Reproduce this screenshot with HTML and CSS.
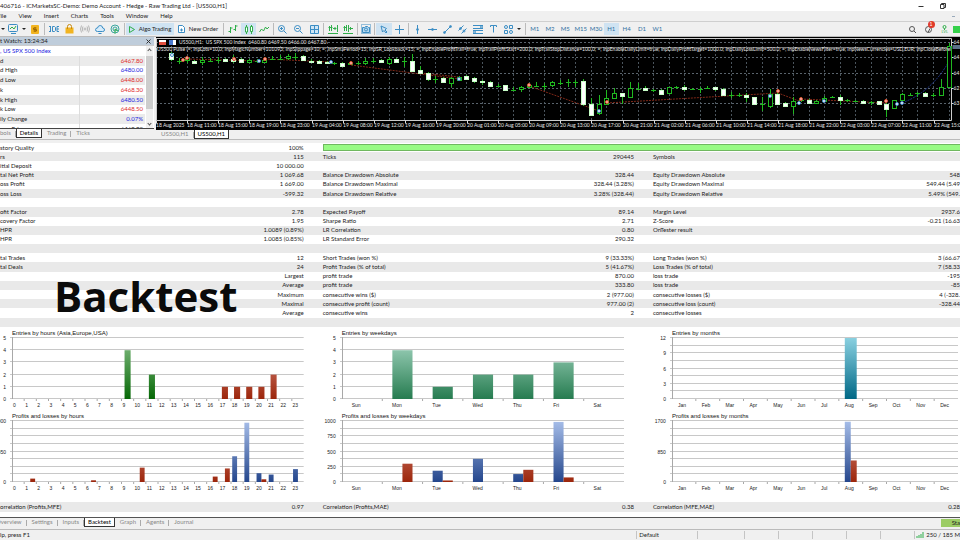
FILE: index.html
```
<!DOCTYPE html>
<html lang="en">
<head>
    <meta charset="UTF-8">
    <title>Demo Account - [US500,H1]</title>
    <link rel="stylesheet" href="styles.css">
</head>
<body>
    <header class="title-bar">
        <span>406716 - ICMarketsSC-Demo: Demo Account - Hedge - Raw Trading Ltd - [US500,H1]</span>
        <div class="window-buttons">
            <button aria-label="Minimize"><svg width="6" height="6"><path d="M0.5 3.5h5"/></svg></button>
            <button aria-label="Restore"><svg width="6" height="6"><path d="M0.5 1.5h3.5v4h-3.5zM1.5 1.5v-1h4v4h-1.5"/></svg></button>
        </div>
    </header>

    <nav class="menu-bar">
        <a href="#">File</a>
        <a href="#">View</a>
        <a href="#">Insert</a>
        <a href="#">Charts</a>
        <a href="#">Tools</a>
        <a href="#">Window</a>
        <a href="#">Help</a>
        <span class="mdi-min"></span>
    </nav>

    <div class="toolbar">
        <div class="group start">
            <span class="arrow"></span>
            <button aria-label="Chart window"><svg class="blue" width="11" height="10"><rect x="0.5" y="0.5" width="9" height="7" rx="1"/><path d="M3 9.5h5"/><path class="green" d="M2 5l2-2 2 2 2-3"/></svg></button>
            <span class="arrow"></span>
            <button aria-label="Symbols"><svg width="8" height="9"><rect class="gold" width="8" height="9" rx="1"/><path class="brown" d="M5.5 3h-3v1.500h3v1.500h-3M4 2v5"/></svg></button>
        </div>
        <div class="group five">
            <button aria-label="IDE"><svg class="blue" width="10" height="8"><path d="M0 1.5h2M0 6.500h2M1.500 1.500v5M3.500 1.500v5M3.500 1.500h2l1 1v3l-1 1h-2M10 1.500h-2v5h2M8 4h2"/></svg></button>
            <button aria-label="Market"><svg width="9" height="10"><path class="gold" d="M0.500 3.500h8v6h-8z"/><path class="bag" d="M2.500 5v-2.500q0-2 2-2t2 2v2.500"/></svg></button>
            <button aria-label="Signals"><svg class="grey" width="10" height="8"><circle cx="5" cy="4" r="1"/><path d="M3 1.500q-1.500 2.500 0 5M7 1.500q1.500 2.500 0 5M1.500 0.500q-2 3.500 0 7M8.500 0.500q2 3.500 0 7"/></svg></button>
            <button aria-label="VPS"><svg class="blue" width="10" height="9"><path fill="#d8ecfa" d="M2.500 6.500q-2 0-2-1.800t2-1.700q0.500-2.500 2.700-2.500t2.500 2.500q2 0.200 1.800 2t-2 1.500z"/><path d="M3.500 8.500h3"/></svg></button>
            <button aria-label="Strategy tester"><svg class="teal" width="10" height="10"><circle cx="5" cy="5" r="4"/><circle cx="5" cy="5" r="2"/><path class="green" d="M5 5v4.500M5 5l3 2"/></svg></button>
        </div>
        <div class="group">
            <button class="labelled active"><svg class="green" width="6" height="7"><path d="M0.500 0.500l5 3-5 3z"/></svg>Algo Trading</button>
            <button class="labelled"><svg class="blue" width="7" height="8"><path fill="#fff" d="M0.500 0.500h4l2 2v5h-6z"/><path d="M2 5h3M3.500 3.500v3"/></svg>New Order</button>
        </div>
        <div class="group three">
            <button aria-label="Bar chart"><svg class="green" width="10" height="8"><path d="M2.500 2v6M0.500 6.500h2M2.500 3h2M7.500 0v6M5.500 4.500h2M7.500 1h2"/></svg></button>
            <button class="active" aria-label="Candles"><svg class="green" width="10" height="9"><path d="M2.500 0v9M7.500 0v9"/><path fill="#fff" d="M1.500 2h2v5h-2zM6.500 1.500h2v5h-2z"/></svg></button>
            <button aria-label="Line chart"><svg class="green" width="10" height="7"><path d="M0.500 6l2-3 2 2 2-4 1.500 2 2-2"/></svg></button>
        </div>
        <div class="group three">
            <button aria-label="Zoom in"><svg class="blue" width="9" height="9"><circle cx="3.500" cy="3.500" r="3"/><path d="M6 6l2.500 2.500M2 3.500h3M3.500 2v3"/></svg></button>
            <button aria-label="Zoom out"><svg class="blue" width="9" height="9"><circle cx="3.500" cy="3.500" r="3"/><path d="M6 6l2.500 2.500M2 3.500h3"/></svg></button>
            <button aria-label="Tile windows"><svg class="blue" width="9" height="9"><path fill="#cfe6f6" d="M0.500 0.500h8v8h-8zM4.500 0.500v8M0.500 4.500h8"/></svg></button>
        </div>
        <div class="group two">
            <button aria-label="Auto scroll"><svg class="green" width="10" height="9"><path d="M1.500 1v5M3.500 0v6M0.500 2.500h4M5 3.500h3M6.500 2l1.500 1.500-1.500 1.500M9.500 0v7M0 8.500h10"/></svg></button>
            <button aria-label="Chart shift"><svg class="green" width="10" height="9"><path d="M1.500 1v5M3.500 0v6M0.500 2.500h3M5.500 0v7M7 3.500h3M8 2l-1.500 1.500 1.500 1.500M0 8.500h10"/></svg></button>
        </div>
        <div class="group one">
            <button aria-label="Screenshot"><svg class="blue" width="10" height="10"><rect x="0.500" y="0.500" width="9" height="9" stroke-dasharray="1 1"/><path fill="#b5d8ef" d="M1.500 3.500h2l1-1h2l1 1h1v5h-7z"/><circle cx="5" cy="5.500" r="1.500"/></svg></button>
        </div>
        <div class="group two">
            <button class="active" aria-label="Cursor"><svg class="blue" width="8" height="9"><path d="M1 1l1.500 6 1.500-1.500 2 2.500 1-1-2-2 1.500-1.500z"/></svg></button>
            <button aria-label="Crosshair"><svg class="blue" width="9" height="9"><path d="M4.500 0v9M0 4.500h9"/></svg></button>
        </div>
        <div class="group draw">
            <button aria-label="Vertical line"><svg class="blue" width="9" height="9"><path d="M4.500 0v9"/><circle cx="4.500" cy="4.500" r="1"/></svg></button>
            <button aria-label="Horizontal line"><svg class="blue" width="9" height="9"><path d="M0 4.500h9"/><circle cx="4.500" cy="4.500" r="1"/></svg></button>
            <button aria-label="Trend line"><svg class="blue" width="9" height="9"><path d="M1 8l7-7"/><circle cx="1.500" cy="7.500" r="1"/><circle cx="7.500" cy="1.500" r="1"/></svg></button>
            <button aria-label="Channel"><svg class="blue" width="9" height="9"><path d="M0.500 5.500l5-5M3.500 8.500l5-5"/><circle cx="2.500" cy="3.500" r="1"/><circle cx="6" cy="6" r="1"/></svg></button>
            <button aria-label="Fibonacci"><svg class="blue" width="10" height="9"><path d="M0 0.500h10M0 3.500h10M0 5.500h10M0 8.500h10"/><circle cx="1.500" cy="7" r="1"/><circle cx="8.500" cy="2" r="1"/></svg></button>
            <button aria-label="Text"><svg class="blue" width="7" height="8"><path d="M0.500 2v-1.500h6v1.500M3.500 0.500v7"/></svg></button>
            <button aria-label="Objects"><svg class="blue" width="9" height="9"><circle cx="2" cy="2" r="1.500"/><path d="M5.500 0.500h3v3h-3zM0.500 5.500h3v3h-3z"/><circle cx="7" cy="7" r="1.500"/></svg></button>
        </div>
        <span class="arrow"></span>
        <div class="group frames">
            <button>M1</button>
            <button>M2</button>
            <button>M5</button>
            <button>M15</button>
            <button>M30</button>
            <button class="active">H1</button>
            <button>H4</button>
            <button>D1</button>
            <button>W1</button>
        </div>
        <div class="toolbar-right">
            <button aria-label="Search"><svg class="dark" width="7" height="7"><circle cx="3" cy="3" r="2.500"/><path d="M5 5l2 2"/></svg></button>
            <button class="bell" aria-label="Notifications"><svg class="dark" width="8" height="7"><circle cx="3.500" cy="3.500" r="3"/><path d="M3 6.500l2-4"/></svg><span class="badge">1</span></button>
            <button class="level" aria-label="Level"><svg class="green" width="5" height="5"><circle cx="2.500" cy="2" r="1.500"/><path d="M2.500 3.500v1.500"/></svg>LVL</button>
            <span class="battery"></span>
        </div>
    </div>

    <main class="workspace">
        <section class="watch">
            <div class="watch-header"><span>t Watch: 13:24:34</span><button aria-label="Close"><svg width="5" height="5"><path d="M0.500 0.500l4 4M4.500 0.500l-4 4"/></svg></button></div>
            <div class="watch-body">
                <table>
                    <colgroup><col class="name"><col></colgroup>
                    <tr><td colspan="2" class="up">, US SPX 500 Index</td></tr>
                    <tr><td>d</td><td class="down">6467.80</td></tr>
                    <tr><td>d High</td><td class="up">6480.00</td></tr>
                    <tr><td>d Low</td><td class="down">6448.00</td></tr>
                    <tr><td>k</td><td class="down">6468.30</td></tr>
                    <tr><td>k High</td><td class="up">6480.50</td></tr>
                    <tr><td>k Low</td><td class="down">6448.50</td></tr>
                    <tr><td>ily Change</td><td class="up">0.07%</td></tr>
                    <tr><td>pen Price</td><td>6468.20</td></tr>
                </table>
                <div class="scrollbar"><span class="chev"></span><span class="thumb"></span><span class="chev flip"></span></div>
            </div>
            <nav class="tabs watch-tabs">
                <a href="#">bols</a>
                <a href="#" class="selected">Details</a>
                <a href="#">Trading</a>
                <a href="#">Ticks</a>
            </nav>
        </section>

        <section class="chart-window">
            <div class="price-chart">
                <svg id="priceChart"></svg>
                <div class="chart-caption"><i class="flag red"></i><i class="flag"></i>US500,H1:&nbsp; US SPX 500 Index&nbsp; 6460.80 6469.50 6466.00 6467.80</div>
                <div class="chart-inputs">US500 Pulse (=; InpLots=10.0; InpMagicNumber=101093; InpSlippage=10; =; InpSmaPeriod=15; InpSR_Lookback=15; =; InpEnableProfitTrail=true; InpTrailProfitStart=200.0; InpTrailStopDistance=100.0; =; InpEnableDailyLimit=true; InpDailyProfitTarget=1000.0; InpDailyLossLimit=500.0; =; InpEnableNewsFilter=true; InpNewsCurrencies=USD,EUR; InpCloseBeforeNews=false; InpNo</div>
            </div>
            <nav class="tabs chart-tabs">
                <a href="#">US500,H1</a>
                <a href="#" class="selected">US500,H1</a>
            </nav>
        </section>
    </main>

    <section class="report">
        <div class="stats">
            <table>
                <colgroup><col class="c1"><col class="c2"><col class="c3"><col class="c4"><col class="c5"><col class="c6"></colgroup>
                <tr><td>story Quality</td><td>100%</td><td colspan="4" class="quality"><div></div></td></tr>
                <tr><td>rs</td><td>115</td><td>Ticks</td><td>290445</td><td>Symbols</td><td></td></tr>
                <tr><td>itial Deposit</td><td>10 000.00</td><td></td><td></td><td></td><td></td></tr>
                <tr><td>tal Net Profit</td><td>1 069.68</td><td>Balance Drawdown Absolute</td><td>328.44</td><td>Equity Drawdown Absolute</td><td>548</td></tr>
                <tr><td>oss Profit</td><td>1 669.00</td><td>Balance Drawdown Maximal</td><td>328.44 (3.28%)</td><td>Equity Drawdown Maximal</td><td>549.44 (5.49</td></tr>
                <tr><td>oss Loss</td><td>-599.32</td><td>Balance Drawdown Relative</td><td>3.28% (328.44)</td><td>Equity Drawdown Relative</td><td>5.49% (549.</td></tr>
                <tr><td></td><td></td><td></td><td></td><td></td><td></td></tr>
                <tr><td>ofit Factor</td><td>2.78</td><td>Expected Payoff</td><td>89.14</td><td>Margin Level</td><td>2937.6</td></tr>
                <tr><td>covery Factor</td><td>1.95</td><td>Sharpe Ratio</td><td>2.71</td><td>Z-Score</td><td>-0.21 (16.63</td></tr>
                <tr><td>HPR</td><td>1.0089 (0.89%)</td><td>LR Correlation</td><td>0.80</td><td>OnTester result</td><td></td></tr>
                <tr><td>HPR</td><td>1.0085 (0.85%)</td><td>LR Standard Error</td><td>290.32</td><td></td><td></td></tr>
                <tr><td></td><td></td><td></td><td></td><td></td><td></td></tr>
                <tr><td>tal Trades</td><td>12</td><td>Short Trades (won %)</td><td>9 (33.33%)</td><td>Long Trades (won %)</td><td>3 (66.67</td></tr>
                <tr><td>tal Deals</td><td>24</td><td>Profit Trades (% of total)</td><td>5 (41.67%)</td><td>Loss Trades (% of total)</td><td>7 (58.33</td></tr>
                <tr><td></td><td>Largest</td><td>profit trade</td><td>870.00</td><td>loss trade</td><td>-195</td></tr>
                <tr><td></td><td>Average</td><td>profit trade</td><td>333.80</td><td>loss trade</td><td>-85</td></tr>
                <tr><td></td><td>Maximum</td><td>consecutive wins ($)</td><td>2 (977.00)</td><td>consecutive losses ($)</td><td>4 (-328.</td></tr>
                <tr><td></td><td>Maximal</td><td>consecutive profit (count)</td><td>977.00 (2)</td><td>consecutive loss (count)</td><td>-328.44</td></tr>
                <tr><td></td><td>Average</td><td>consecutive wins</td><td>2</td><td>consecutive losses</td><td></td></tr>
                <tr><td></td><td></td><td></td><td></td><td></td><td></td></tr>
            </table>
            <h1 class="overlay-title">Backtest</h1>
        </div>

        <div class="charts">
            <div class="chart-column hours">
                <figure data-chart="hours"></figure>
                <figure data-chart="hoursProfit"></figure>
            </div>
            <div class="chart-column weekdays">
                <figure data-chart="weekdays"></figure>
                <figure data-chart="weekdaysProfit"></figure>
            </div>
            <div class="chart-column months">
                <figure data-chart="months"></figure>
                <figure data-chart="monthsProfit"></figure>
            </div>
        </div>

        <table class="correlation">
            <colgroup><col class="c1"><col class="c2"><col class="c3"><col class="c4"><col class="c5"><col class="c6"></colgroup>
            <tr><td>orrelation (Profits,MFE)</td><td>0.97</td><td>Correlation (Profits,MAE)</td><td>0.38</td><td>Correlation (MFE,MAE)</td><td>0.28</td></tr>
        </table>
    </section>

    <div class="bottom-bar">
        <nav class="tabs bottom-tabs">
            <a href="#">Overview</a>
            <a href="#">Settings</a>
            <a href="#">Inputs</a>
            <a href="#" class="selected">Backtest</a>
            <a href="#">Graph</a>
            <a href="#">Agents</a>
            <a href="#">Journal</a>
        </nav>
        <button class="start-button">Sta</button>
    </div>

    <footer class="status-bar">
        <span class="help">lp, press F1</span>
        <span class="profile">Default</span>
        <span class="cell"></span>
        <span class="cell small"></span>
        <span class="cell small"></span>
        <span class="cell small"></span>
        <span class="cell small"></span>
        <span class="cell small"></span>
        <span class="traffic"><svg width="8" height="6"><path d="M1 6v-2M3 6v-3M5 6v-4M7 6v-6"/></svg>250 / 185 M</span>
    </footer>

    <script src="charts.js"></script>
</body>
</html>
```
FILE: styles.css
```
* {
    box-sizing: border-box;
}
body {
    margin: 0;
    height: 100vh;
    display: flex;
    flex-direction: column;
    overflow: hidden;
    background: #f0f0f0;
    color: #222;
    font: 6px/8px Lato, sans-serif;
    white-space: nowrap;
}
button {
    border: 0;
    padding: 0;
    margin: 0;
    background: none;
    font: inherit;
    color: inherit;
    display: flex;
    align-items: center;
    justify-content: center;
}
a {
    color: inherit;
    text-decoration: none;
}
svg {
    display: block;
    flex: none;
    fill: none;
    stroke: #333;
}
table {
    border-collapse: collapse;
    table-layout: fixed;
    width: 100%;
}
td {
    padding: 0;
    overflow: hidden;
    line-height: 8px;
}

/* title and menu */
.title-bar {
    height: 11px;
    background: #fff;
    display: flex;
    align-items: center;
    justify-content: space-between;
}
.window-buttons {
    display: flex;
    gap: 16px;
    padding-right: 14px;
}
.menu-bar {
    height: 11px;
    display: flex;
    align-items: center;
    gap: 12px;
    margin-left: -3px;
    border-bottom: 1px solid #cfcfcf;
    background: #f0f0f0;
}
.mdi-min {
    margin: 0 5px 0 auto;
    width: 3px;
    height: 1px;
    background: #9ab;
}

/* toolbar */
.toolbar {
    height: 15px;
    display: flex;
    align-items: center;
    border-bottom: 1px solid #bbb;
}
.group {
    display: flex;
    height: 12px;
    border-right: 1px solid #bbb;
    padding: 0 1px;
}
.group button {
    flex: 1;
}
.group .labelled {
    flex: none;
    gap: 4px;
    padding: 0 2px;
    width: 48px;
}
.start {
    width: 45px;
    align-items: center;
}
.start .arrow {
    flex: none;
}
.five {
    width: 80px;
}
.three {
    width: 50px;
}
.two {
    width: 34px;
}
.one {
    width: 17px;
}
.draw {
    width: 108px;
    border: 0;
}
.frames {
    width: 141px;
    border: 0;
    border-left: 1px solid #bbb;
    margin-left: 4px;
    color: #2f6f9f;
}
.active {
    background: #cfe3f2;
}
.arrow {
    border: 2px solid transparent;
    border-top-color: #222;
    border-bottom: 0;
    width: 4px;
}
.blue {
    stroke: #3b8dc4;
}
.green {
    stroke: #2fae4a;
}
.teal {
    stroke: #3aa6a0;
}
.grey {
    stroke: #b5b5b5;
}
.dark {
    stroke: #555;
}
.gold {
    fill: #f2b420;
    stroke: none;
}
.brown {
    stroke: #a06a00;
}
.bag {
    stroke: #c78a10;
}
.toolbar-right {
    margin-left: auto;
    display: flex;
    align-items: center;
    gap: 9px;
}
.bell {
    position: relative;
}
.badge {
    position: absolute;
    left: 3px;
    top: -5px;
    width: 7px;
    height: 7px;
    border-radius: 50%;
    background: #e03a2a;
    color: #fff;
    font-size: 5px;
    line-height: 7px;
    text-align: center;
}
.level {
    flex-direction: column;
    font-size: 4px;
    line-height: 4px;
    color: #2fae4a;
}
.battery {
    width: 7px;
    height: 7px;
    margin-left: -4px;
    background: #35d04a;
}

/* market watch and price chart */
.workspace {
    display: flex;
    flex: none;
    height: 103px;
    border-bottom: 1px solid #bbb;
}
.watch {
    width: 154px;
    display: flex;
    flex-direction: column;
}
.watch-header {
    height: 8px;
    flex: none;
    display: flex;
    align-items: center;
    justify-content: space-between;
    padding-right: 3px;
    background: #bfcddb;
}
.watch-body {
    flex: 1;
    min-height: 0;
    display: flex;
    align-items: flex-start;
    overflow: hidden;
    background: #fff;
    border-top: 1px solid #ccc;
}
.watch-body table {
    flex: 1;
    height: 88px;
}
.watch-body tr:nth-child(even) {
    background: #ebebeb;
}
.name {
    width: 79px;
}
.watch-body td + td {
    border-left: 1px solid #ddd;
    text-align: right;
    padding-right: 2px;
}
.up {
    color: #2222e0;
}
.down {
    color: #e02a2a;
}
.scrollbar {
    width: 7px;
    height: 100%;
    margin: 0 1px;
    background: #f0f0f0;
    display: flex;
    flex-direction: column;
    align-items: center;
    padding: 3px 0;
}
.thumb {
    width: 7px;
    height: 53px;
    margin: 4px 0 auto;
    background: #cdcdcd;
}
.chev {
    width: 3px;
    height: 3px;
    border: 1px solid #555;
    border-right: 0;
    border-bottom: 0;
    transform: rotate(45deg);
}
.flip {
    transform: rotate(225deg);
}
.tabs {
    display: flex;
    color: #888;
}
.tabs a {
    position: relative;
    padding: 0 5px;
    height: 9px;
    line-height: 8px;
}
.tabs a:not(.selected):not(:last-child)::after {
    content: "";
    position: absolute;
    right: 0;
    top: 2px;
    height: 6px;
    border-right: 1px solid #aaa;
}
.tabs .selected {
    background: #fff;
    color: #000;
    border: 1px solid #333;
    border-top: 0;
    padding: 0 3px;
}
.watch-tabs {
    height: 11px;
    border-top: 1px solid #444;
}
.watch-tabs a:first-child,
.bottom-tabs a:first-child {
    padding-left: 0;
}
.bottom-tabs {
    margin-left: -4px;
}
.chart-window {
    flex: 1;
    min-width: 0;
    display: flex;
    flex-direction: column;
    padding-left: 2px;
}
.price-chart {
    position: relative;
    flex: none;
    height: 93px;
    background: #000;
    overflow: hidden;
    color: #e8e8e8;
    font: 5px/7px Lato, sans-serif;
}
.price-chart svg {
    width: 100%;
    height: 100%;
}
.price-chart text {
    fill: #e8e8e8;
    stroke: none;
}
.chart-caption {
    position: absolute;
    left: 3px;
    top: 2px;
    display: flex;
    align-items: center;
    gap: 3px;
    background: #000;
}
.flag {
    width: 7px;
    height: 5px;
    background: linear-gradient(90deg, #4a7ad0 50%, #fff 50%);
}
.flag.red {
    background: linear-gradient(#fff 40%, #e05040 40%);
}
.chart-inputs {
    position: absolute;
    left: 1px;
    right: 9px;
    top: 9px;
    overflow: hidden;
}

/* report */
.report {
    flex: 1;
    display: flex;
    flex-direction: column;
    background: #fff;
    border-top: 3px solid #f0f0f0;
    min-height: 0;
}
.stats {
    position: relative;
}
.stats table {
    height: 184px;
}
.stats tr {
    height: 9px;
}
.stats tr:nth-child(even),
.correlation {
    background: #e9e9e9;
}
.c1 {
    width: 20%;
}
.c2 {
    width: 13.3%;
}
.c3 {
    width: 20%;
}
.c4 {
    width: 14.4%;
}
.c5 {
    width: 18%;
}
.report td:nth-child(even) {
    text-align: right;
    padding-right: 16px;
}
.report td:nth-child(3),
.report td:nth-child(5) {
    padding-left: 3px;
}
.report td:nth-child(6) {
    padding-right: 0;
}
.quality div {
    height: 7px;
    border: 1px solid #70b860;
    border-right: 0;
    background: #98fb84;
}
.overlay-title {
    position: absolute;
    left: 54px;
    top: 123px;
    margin: 0;
    color: #0b0b0b;
    font: 700 42px/60px "Open Sans", sans-serif;
}
.charts {
    flex: 1;
    display: flex;
    padding-top: 2px;
}
.chart-column {
    width: 33.3%;
    padding: 0 16px 0 10px;
}
.weekdays {
    width: 34.4%;
    padding: 0 26px 0 20px;
}
.months {
    width: 32.3%;
    padding: 0 2px 0 20px;
}
figure {
    position: relative;
    margin: 0;
    height: 83px;
    font: 5px/6px "Liberation Sans", sans-serif;
}
figcaption {
    padding-left: 2px;
    height: 8px;
    color: #111;
    font: 6px/8px "Liberation Sans", sans-serif;
}
.plot {
    width: 100%;
    height: 65px;
}
.plot line {
    stroke: #c8c8c8;
}
.plot .axis {
    stroke: #a8a8a8;
}
.plot rect {
    stroke: none;
}
.scale {
    position: absolute;
    right: 100%;
    top: 6px;
    height: 67px;
    padding-right: 4px;
    display: flex;
    flex-direction: column;
    justify-content: space-between;
    text-align: right;
}
.slots {
    display: flex;
    padding-left: 2px;
}
.slots span {
    flex: 1 1 0;
    min-width: 0;
    padding-left: 1px;
}
.weekdays .slots span {
    padding-left: 10px;
}
.months .slots span {
    padding-left: 6px;
}
.correlation {
    height: 10px;
    margin-bottom: 5px;
}

/* bottom */
.bottom-bar {
    height: 13px;
    display: flex;
    justify-content: space-between;
    align-items: flex-start;
    border-top: 1px solid #555;
    border-bottom: 1px solid #bbb;
}
.start-button {
    width: 19px;
    height: 8px;
    margin-top: 1px;
    justify-content: flex-end;
    background: #9ccc65;
}
.status-bar {
    height: 10px;
    display: flex;
    align-items: center;
    color: #222;
}
.status-bar span {
    height: 8px;
    border-right: 1px solid #c4c4c4;
}
.help {
    flex: 1;
}
.profile {
    width: 61px;
    padding-left: 2px;
}
.cell {
    width: 47px;
}
.cell.small {
    width: 34px;
}
.status-bar .traffic {
    flex: none;
    display: flex;
    align-items: center;
    gap: 2px;
    padding-left: 1px;
    border: 0;
}
.traffic svg {
    stroke: #2fae4a;
}
```
FILE: charts.js
```
const days = ['Sun', 'Mon', 'Tue', 'Wed', 'Thu', 'Fri', 'Sat'];
const monthNames = ['Jan', 'Feb', 'Mar', 'Apr', 'May', 'Jun', 'Jul', 'Aug', 'Sep', 'Oct', 'Nov', 'Dec'];
const hourNames = [...Array(24).keys()];

// top and bottom colour of a full height bar
const colors = {
    green: ['#88c088', '#066806'],
    red: ['#e0988c', '#9c260c'],
    sea: ['#a8d8c4', '#267c50'],
    teal: ['#8cd2e2', '#006886'],
    blue: ['#a8bfea', '#24468c']
};

// bars, profit and loss: [slot, value, color]
const charts = {
    hours: {
        title: 'Entries by hours (Asia,Europe,USA)', max: 5, lines: 5, scale: [5, 4, 3, 2, 1, 0], labels: hourNames,
        bars: [[9, 4, 'green'], [11, 2, 'green'], [17, 1, 'red'], [18, 1, 'red'], [19, 1, 'red'], [20, 1, 'red'], [21, 2, 'red']]
    },
    hoursProfit: {
        title: 'Profits and losses by hours', max: 900, lines: 8, scale: [900, 450, 0], labels: hourNames, width: 0.4,
        profit: [[18, 380], [19, 875], [20, 130], [21, 110], [23, 190]],
        loss: [[1, 50], [6, 25], [10, 212], [16, 80], [17, 200], [20, 40]]
    },
    weekdays: {
        title: 'Entries by weekdays', max: 5, lines: 5, scale: [5, 4, 3, 2, 1, 0], labels: days,
        bars: [[1, 4, 'sea'], [2, 1, 'sea'], [3, 2, 'sea'], [4, 2, 'sea'], [5, 3, 'sea']]
    },
    weekdaysProfit: {
        title: 'Profits and losses by weekdays', max: 1000, lines: 8, scale: [1000, 750, 500, 250, 0], labels: days, width: 0.25,
        profit: [[2, 185], [3, 380], [4, 130], [5, 985]],
        loss: [[1, 300], [2, 25], [4, 200], [5, 75]]
    },
    months: {
        title: 'Entries by months', max: 12, lines: 8, scale: [12, 9, 6, 3, 0], labels: monthNames,
        bars: [[7, 12, 'teal']]
    },
    monthsProfit: {
        title: 'Profits and losses by months', max: 1700, lines: 8, scale: [1700, 850, 0], labels: monthNames, width: 0.25,
        profit: [[7, 1680]],
        loss: [[7, 600]]
    }
};

function barChart(figure) {
    const name = figure.dataset.chart;
    const chart = charts[name];
    const slots = chart.labels.length;
    const height = 62;
    const bars = (chart.bars || []).map(b => [...b, 0.25, 0.5]);
    (chart.profit || []).forEach(b => bars.push([...b, 'blue', 0.5 - chart.width, chart.width]));
    (chart.loss || []).forEach(b => bars.push([...b, 'red', 0.5, chart.width]));

    let defs = '';
    for (const c in colors) {
        defs += `<linearGradient id="${name}-${c}" gradientUnits="userSpaceOnUse" x1="0" y1="0" x2="0" y2="${height}">
            <stop offset="0" stop-color="${colors[c][0]}"/><stop offset="1" stop-color="${colors[c][1]}"/></linearGradient>`;
    }
    let out = `<defs>${defs}</defs>`;
    for (let i = 0; i <= chart.lines; i++) {
        const y = Math.round(i * (height - 1) / chart.lines) + 0.5;
        out += `<line x1="0" x2="100%" y1="${y}" y2="${y}"/>`;
    }
    out += `<line class="axis" x1="2.5" x2="2.5" y1="0" y2="${height}"/>`;
    // the slots begin at the axis, 2px into the drawing
    out += '<svg x="2" width="100%" height="65" overflow="visible">';
    const plotWidth = figure.clientWidth - 2;
    const slot = plotWidth / slots;
    for (let i = 1; i < slots; i++) {
        out += `<line class="axis" x1="${i * slot}" x2="${i * slot}" y1="${height}" y2="${height + 2}"/>`;
    }
    bars.forEach(([at, value, color, start, width]) => {
        const h = value / chart.max * (height - 1);
        out += `<rect x="${(at + start) * slot}" y="${height - h}" width="${width * slot}" height="${h}" fill="url(#${name}-${color})"/>`;
    });
    out += '</svg>';

    figure.innerHTML = `<figcaption>${chart.title}</figcaption>
        <svg class="plot">${out}</svg>
        <div class="scale">${chart.scale.map(s => `<span>${s}</span>`).join('')}</div>
        <div class="slots">${chart.labels.map(l => `<span>${l}</span>`).join('')}</div>`;
}

// candle: [body top, body bottom, wick top, wick bottom, falling], in thirds of a pixel from the window top
const candles = [
    [160, 178, 155, 182, 1], [183, 183, 173, 192], [175, 180, 168, 188], [184, 190, 180, 192, 1], [181, 187, 172, 195],
    [182, 182, 173, 187], [181, 181, 171, 190], [178, 184, 174, 187, 1], [178, 183, 165, 190, 1], [178, 187, 174, 190, 1],
    [180, 186, 176, 190], [184, 184, 178, 190], [181, 186, 172, 190], [176, 176, 168, 180], [177, 177, 165, 180],
    [167, 174, 162, 180], [170, 170, 160, 180], [168, 181, 165, 182, 1], [182, 186, 176, 188, 1], [184, 188, 180, 190, 1],
    [186, 190, 183, 192, 1], [189, 189, 185, 194], [189, 197, 187, 200, 1], [188, 193, 183, 196], [189, 189, 183, 194],
    [182, 188, 174, 194], [182, 182, 174, 188], [181, 187, 178, 190, 1], [178, 188, 172, 195], [178, 185, 175, 188, 1],
    [184, 184, 172, 200], [182, 212, 162, 214, 1], [211, 218, 197, 220, 1], [218, 237, 215, 242, 1], [236, 236, 228, 248],
    [234, 247, 232, 249, 1], [235, 248, 230, 260], [232, 240, 227, 243], [228, 236, 224, 237, 1], [234, 242, 230, 248, 1],
    [243, 247, 240, 255, 1], [247, 257, 243, 260, 1], [257, 257, 252, 262], [256, 271, 254, 272, 1], [270, 270, 262, 273],
    [262, 267, 258, 276], [256, 262, 250, 264], [258, 258, 245, 262], [258, 258, 248, 270], [246, 256, 242, 262],
    [248, 248, 240, 255], [247, 247, 238, 260], [246, 246, 240, 262], [243, 311, 237, 318, 1], [311, 345, 295, 348, 1],
    [313, 340, 285, 345], [295, 313, 270, 316], [279, 295, 265, 297], [279, 288, 278, 312, 1], [265, 290, 246, 290],
    [266, 266, 250, 268], [265, 270, 258, 272, 1], [270, 270, 266, 275], [270, 282, 268, 286, 1], [262, 280, 260, 282],
    [261, 261, 257, 268], [260, 267, 256, 274, 1], [267, 267, 264, 270], [268, 268, 262, 280], [264, 264, 258, 268],
    [262, 267, 260, 272, 1], [266, 284, 263, 285, 1], [284, 284, 275, 295], [284, 284, 280, 292], [286, 292, 280, 305, 1],
    [292, 312, 290, 314, 1], [313, 313, 290, 332], [283, 317, 268, 325], [281, 311, 270, 313, 1], [309, 319, 306, 322, 1],
    [303, 319, 292, 341], [300, 300, 292, 306], [299, 308, 297, 310, 1], [304, 310, 300, 312], [293, 302, 288, 306],
    [291, 291, 288, 295], [290, 300, 286, 314, 1], [301, 301, 296, 306], [303, 303, 299, 307], [304, 308, 301, 310, 1],
    [307, 307, 302, 314], [304, 311, 302, 313, 1], [311, 326, 300, 350, 1], [301, 325, 300, 327], [283, 301, 280, 303],
    [284, 284, 280, 287], [280, 280, 277, 290], [279, 287, 277, 292, 1], [286, 286, 278, 290], [262, 286, 238, 288],
    [137, 260, 128, 262]
];
const buys = [[16, 18], [103, 24], [175, 25], [303, 42], [443, 74], [614, 59], [643, 66], [668, 64], [741, 67], [746, 66]];
const sells = [[27, 23], [31, 21], [78, 22], [109, 22], [195, 26], [373, 48], [451, 65], [622, 54], [645, 62], [730, 64]];
const times = ['18 Aug 2025', '18 Aug 11:00', '18 Aug 15:00', '18 Aug 19:00', '18 Aug 23:00', '19 Aug 04:00', '19 Aug 08:00',
    '19 Aug 12:00', '19 Aug 16:00', '19 Aug 20:00', '20 Aug 01:00', '20 Aug 05:00', '20 Aug 09:00', '20 Aug 13:00',
    '20 Aug 17:00', '20 Aug 21:00', '21 Aug 02:00', '21 Aug 06:00', '21 Aug 10:00', '21 Aug 14:00', '21 Aug 18:00',
    '21 Aug 22:00', '22 Aug 03:00', '22 Aug 07:00', '22 Aug 11:00', '22 Aug 15:00'];
const prices = [[6, '64'], [21, '64'], [37, '64'], [52, '62'], [67, '63']];

function priceChart(svg) {
    const right = Math.round(svg.clientWidth) - 8.5;
    const step = (right - 18) / 100;
    const bottom = 83.5;
    const y = v => Math.round(v / 3) - 37;
    let out = '';
    for (let i = 0; i < 101; i += 2) {
        const x = Math.round(16 + i * step) - 0.5;
        out += `<path stroke="#4a545c" stroke-dasharray="2 2" d="M${x} 1V${bottom}"/>`;
    }
    prices.forEach(([py, label]) => {
        out += `<path stroke="#59636c" stroke-dasharray="2 2" d="M0 ${py - 0.5}H${right}"/><path stroke="#ddd" d="M${right} ${py - 0.5}h2"/>
            <text x="${right + 2}" y="${py + 1}">${label}</text>`;
    });
    out += `<path stroke="#ccc" d="M0.500 1V${bottom}H${right}V1.500H0"/><path stroke="#777" d="M0 10.500H${right}"/>
        <rect x="${right + 1}" y="8" width="8" height="4" fill="#5a7088" stroke="none"/>`;
    times.forEach((t, i) => {
        const x = Math.round(i * 4 * step);
        out += `<path stroke="#ddd" d="M${x + 0.5} ${bottom}v3"/><text x="${x}" y="90">${t}</text>`;
    });
    out += `<path stroke="#802818" stroke-dasharray="2 1" d="M31 22L103 24M109 22L175 25M195 28L303 42M265 36L303 40M373 49L443 74M451 66L622 56L643 64M645 62L730 66"/>
        <path stroke="#203a90" stroke-dasharray="2 1" d="M746 66Q775 55 792 26"/>`;
    candles.forEach(([top, low, high, end, falling], i) => {
        const x = Math.round(15 + i * step);
        const t = y(top) + 0.5;
        const h = Math.max(0, y(low) - y(top));
        out += `<path stroke="#20b820" d="M${x + 0.5} ${y(high)}V${y(end)}"/>`;
        if (h === 0 || low === top) {
            out += `<path stroke="#20b820" d="M${x - 2} ${t}h5"/>`;
        } else {
            out += `<rect x="${x - 1.5}" y="${t}" width="4" height="${h}" stroke="${falling ? '#c8ffc8' : '#20b820'}" fill="${falling ? '#fff' : '#000'}"/>`;
        }
    });
    buys.forEach(([bx, by]) => out += `<circle cx="${bx}" cy="${by}" r="1.500" fill="#fff" stroke="#3d7fc4"/>`);
    sells.forEach(([sx, sy]) => out += `<circle cx="${sx}" cy="${sy}" r="1.500" fill="#fbb" stroke="#d8502c"/>`);
    svg.innerHTML = out;
}

document.querySelectorAll('figure').forEach(barChart);
priceChart(document.getElementById('priceChart'));
```
